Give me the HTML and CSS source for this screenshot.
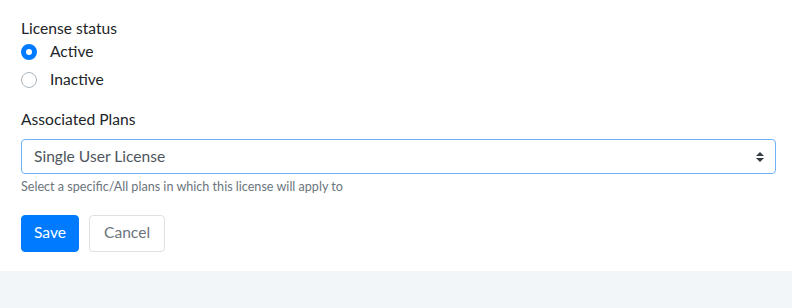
FILE: index.html
```html
<!DOCTYPE html>
<html lang="en">
  <head>
    <meta charset="UTF-8" />
    <meta name="viewport" content="width=device-width, initial-scale=1.0" />
    <title>License Settings</title>
    <link rel="stylesheet" href="styles.css">
  </head>
  <body>
    <div class="card">
      <!-- License status -->
      <p class="label">License status</p>
      <label class="radio-row">
        <input type="radio" name="status" value="active" checked />
        <span class="radio-mark"></span>
        <span>Active</span>
      </label>
      <label class="radio-row">
        <input type="radio" name="status" value="inactive" />
        <span class="radio-mark"></span>
        <span>Inactive</span>
      </label>

      <!-- Plans -->
      <p class="label plans-label">Associated Plans</p>
      <div class="select-wrap">
        <select class="select">
          <option>Single User License</option>
          <option>All Plans</option>
        </select>
        <svg class="select-arrow" width="10" height="12" viewBox="0 0 10 12">
          <path d="M5 1 L9 5 H1 Z" fill="#343a40" />
          <path d="M5 11 L9 7 H1 Z" fill="#343a40" />
        </svg>
      </div>
      <p class="help">Select a specific/All plans in which this license will apply to</p>

      <div class="actions">
        <button class="btn btn-primary">Save</button>
        <button class="btn btn-light">Cancel</button>
      </div>
    </div>
  </body>
</html>
```

FILE: styles.css
```css
body {
  margin: 0;
  font-family: Lato, "Noto Sans", sans-serif;
  background: #f3f6f9;
  color: #212529;
}
.card {
  background: #fff;
  padding: 17px 16px 19px 21px;
  box-shadow: 0 3px 10px rgba(0, 0, 0, 0.16);
}
.label {
  margin: 0;
  font-size: 15.6px;
  line-height: 22px;
}
.plans-label {
  margin-top: 15px;
}
.radio-row {
  display: flex;
  align-items: center;
  height: 26px;
  margin-bottom: 2px;
  font-size: 15.6px;
}
.radio-row span:last-child {
  margin-top: -2px;
}
.radio-row input {
  display: none;
}
.radio-mark {
  width: 16px;
  height: 16px;
  box-sizing: border-box;
  border-radius: 50%;
  border: 1px solid #adb5bd;
  background: #fff;
  margin-right: 13px;
}
.radio-row input:checked + .radio-mark {
  border: 5px solid #007bff;
  background: #fff;
}
.select-wrap {
  position: relative;
  margin-top: 9px;
}
.select {
  display: block;
  width: 100%;
  height: 35px;
  box-sizing: border-box;
  appearance: none;
  -webkit-appearance: none;
  border: 1px solid #6fb3f7;
  border-radius: 4px;
  background: #fff;
  padding: 0 12px 2px;
  font-family: inherit;
  font-size: 15.6px;
  color: #4f565d;
  outline: none;
}
.select-arrow {
  position: absolute;
  right: 11px;
  top: 12px;
  pointer-events: none;
}
.help {
  margin: 5px 0 0;
  font-size: 12.6px;
  line-height: 16px;
  color: #6c757d;
}
.actions {
  display: flex;
  gap: 10px;
  margin-top: 20px;
}
.btn {
  height: 37px;
  padding: 0 12px 3px;
  border-radius: 4px;
  font-family: inherit;
  font-size: 15.6px;
  cursor: pointer;
}
.btn-primary {
  background: #007bff;
  border: 1px solid #007bff;
  color: #fff;
}
.btn-light {
  background: #fff;
  border: 1px solid #dee2e6;
  color: #6c757d;
  padding: 0 14px 3px;
}
```
